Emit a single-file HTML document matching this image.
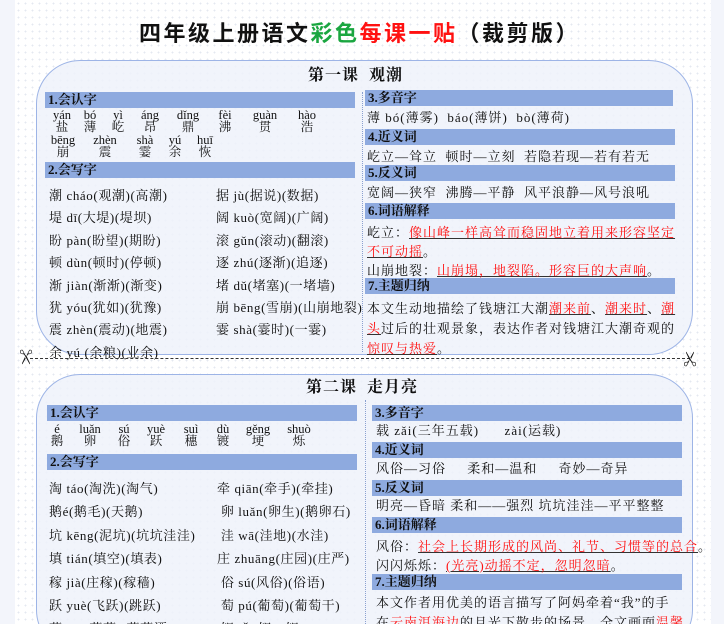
<!DOCTYPE html>
<html><head><meta charset="utf-8"><style>
*{margin:0;padding:0;box-sizing:border-box}
html,body{width:724px;height:624px;overflow:hidden}
body{background:#f3f5fb;position:relative;font-family:"Liberation Serif","Noto Serif CJK SC",serif;color:#111;font-size:13px}
#w{position:absolute;left:0;top:0;width:724px;height:624px;overflow:hidden}
.page{position:absolute;left:15px;top:0;width:696px;height:624px;background:#fff;background-image:radial-gradient(#e4e8f0 0.8px,transparent 0.9px);background-size:7px 7px}
.card{position:absolute;left:36px;width:657px;border:1.5px solid #9db4e6;border-radius:44px;background:rgba(238,242,250,0.85)}
.t{position:absolute;white-space:nowrap;line-height:14px}
.rc{letter-spacing:1px}
.lc{letter-spacing:0.6px}
.bar{position:absolute;background:#8eaadf;height:16px;font-weight:bold;font-size:13px;line-height:16px;padding-left:3px;white-space:nowrap}
.r{color:#f11}
.u{text-decoration:underline;text-decoration-color:#333}
.vd{position:absolute;border-left:1px dotted #8aa0d0;width:0}
.ttl{position:absolute;font-weight:bold;font-size:16px;white-space:nowrap;letter-spacing:1px}
.p{position:absolute;text-align:center;width:40px;line-height:12px;font-size:12.5px;white-space:nowrap}
</style></head><body><div id="w">
<div class="page"></div>
<div class="t" style="left:139px;top:19px;font-size:22px;line-height:30px;letter-spacing:2.5px;font-weight:bold;font-family:'Liberation Sans','Noto Sans CJK SC',sans-serif">四年级上册语文<span style="color:#1aa640">彩色</span><span style="color:#f11">每课一贴</span>（裁剪版）</div>

<div class="card" style="top:60px;height:295px"></div>
<div class="ttl" style="left:308px;top:62px">第一课 &nbsp;观潮</div>
<div class="vd" style="left:362px;top:92px;height:260px"></div>
<div class="bar" style="left:45px;top:92px;width:310px">1.会认字</div>
<div class="p" style="left:42px;top:109px">yán<br>盐</div>
<div class="p" style="left:70px;top:109px">bó<br>薄</div>
<div class="p" style="left:98px;top:109px">yì<br>屹</div>
<div class="p" style="left:130px;top:109px">áng<br>昂</div>
<div class="p" style="left:168px;top:109px">dǐng<br>鼎</div>
<div class="p" style="left:205px;top:109px">fèi<br>沸</div>
<div class="p" style="left:245px;top:109px">guàn<br>贯</div>
<div class="p" style="left:287px;top:109px">hào<br>浩</div>
<div class="p" style="left:43px;top:134px">bēng<br>崩</div>
<div class="p" style="left:85px;top:134px">zhèn<br>震</div>
<div class="p" style="left:125px;top:134px">shà<br>霎</div>
<div class="p" style="left:155px;top:134px">yú<br>余</div>
<div class="p" style="left:185px;top:134px">huī<br>恢</div>
<div class="bar" style="left:45px;top:162px;width:310px">2.会写字</div>
<div class="t lc" style="left:49px;top:185px;line-height:22.4px">潮 cháo(观潮)(高潮)<br>堤 dī(大堤)(堤坝)<br>盼 pàn(盼望)(期盼)<br>顿 dùn(顿时)(停顿)<br>渐 jiàn(渐渐)(渐变)<br>犹 yóu(犹如)(犹豫)<br>震 zhèn(震动)(地震)<br>余 yú (余粮)(业余)</div>
<div class="t lc" style="left:216px;top:185px;line-height:22.4px">据 jù(据说)(数据)<br>阔 kuò(宽阔)(广阔)<br>滚 gǔn(滚动)(翻滚)<br>逐 zhú(逐渐)(追逐)<br>堵 dǔ(堵塞)(一堵墙)<br>崩 bēng(雪崩)(山崩地裂)<br>霎 shà(霎时)(一霎)</div>
<div class="bar" style="left:365px;top:90px;width:308px">3.多音字</div>
<div class="t rc" style="left:367px;top:111px">薄 bó(薄雾) &nbsp;báo(薄饼) &nbsp;bò(薄荷)</div>
<div class="bar" style="left:365px;top:129px;width:310px">4.近义词</div>
<div class="t rc" style="left:367px;top:150px">屹立—耸立 &nbsp;顿时—立刻 &nbsp;若隐若现—若有若无</div>
<div class="bar" style="left:365px;top:165px;width:310px">5.反义词</div>
<div class="t rc" style="left:367px;top:186px">宽阔—狭窄 &nbsp;沸腾—平静 &nbsp;风平浪静—风号浪吼</div>
<div class="bar" style="left:365px;top:203px;width:310px">6.词语解释</div>
<div class="t rc" style="left:367px;top:223px;line-height:19px">屹立：<span class="r u">像山峰一样高耸而稳固地立着用来形容坚定</span><br><span class="r u">不可动摇</span>。<br>山崩地裂：<span class="r u">山崩塌，地裂陷。形容巨的大声响</span>。</div>
<div class="bar" style="left:365px;top:278px;width:310px">7.主题归纳</div>
<div class="t rc" style="left:367px;top:299px;line-height:20px">本文生动地描绘了钱塘江大潮<span class="r u">潮来前</span>、<span class="r u">潮来时</span>、<span class="r u">潮</span><br><span class="r u">头</span>过后的壮观景象，表达作者对钱塘江大潮奇观的<br><span class="r u">惊叹与热爱</span>。</div>

<div style="position:absolute;left:30px;top:358px;width:660px;border-top:1.5px dashed #333"></div>
<div class="t" style="left:16px;top:350px;font-size:16px;transform:rotate(90deg)">✂</div>
<div class="t" style="left:684px;top:352px;font-size:16px;transform:rotate(-90deg)">✂</div>

<div class="card" style="top:374px;height:280px"></div>
<div class="ttl" style="left:306px;top:374px">第二课 &nbsp;走月亮</div>
<div class="vd" style="left:365px;top:400px;height:230px"></div>
<div class="bar" style="left:47px;top:405px;width:310px">1.会认字</div>
<div class="p" style="left:37px;top:423px">é<br>鹅</div>
<div class="p" style="left:70px;top:423px">luǎn<br>卵</div>
<div class="p" style="left:104px;top:423px">sú<br>俗</div>
<div class="p" style="left:136px;top:423px">yuè<br>跃</div>
<div class="p" style="left:171px;top:423px">suì<br>穗</div>
<div class="p" style="left:203px;top:423px">dù<br>镀</div>
<div class="p" style="left:238px;top:423px">gěng<br>埂</div>
<div class="p" style="left:279px;top:423px">shuò<br>烁</div>
<div class="bar" style="left:47px;top:454px;width:310px">2.会写字</div>
<div class="t lc" style="left:49px;top:477px;line-height:23.4px">淘 táo(淘洗)(淘气)<br>鹅é(鹅毛)(天鹅)<br>坑 kēng(泥坑)(坑坑洼洼)<br>填 tián(填空)(填表)<br>稼 jià(庄稼)(稼穑)<br>跃 yuè(飞跃)(跳跃)<br>葡 pú (葡萄)(葡萄酒)</div>
<div class="t lc" style="left:217px;top:477px;line-height:23.4px">牵 qiān(牵手)(牵挂)<br>&nbsp;卵 luǎn(卵生)(鹅卵石)<br>&nbsp;洼 wā(洼地)(水洼)<br>庄 zhuāng(庄园)(庄严)<br>&nbsp;俗 sú(风俗)(俗语)<br>&nbsp;萄 pú(葡萄)(葡萄干)<br>&nbsp;铝 lǚ (铝.)(铝.)</div>
<div class="bar" style="left:372px;top:405px;width:310px">3.多音字</div>
<div class="t rc" style="left:376px;top:424px">载 zǎi(三年五载) &nbsp;&nbsp;&nbsp;&nbsp;&nbsp;zài(运载)</div>
<div class="bar" style="left:372px;top:442px;width:310px">4.近义词</div>
<div class="t rc" style="left:376px;top:462px">风俗—习俗 &nbsp;&nbsp;&nbsp;&nbsp;柔和—温和 &nbsp;&nbsp;&nbsp;&nbsp;奇妙—奇异</div>
<div class="bar" style="left:372px;top:480px;width:310px">5.反义词</div>
<div class="t rc" style="left:376px;top:499px">明亮—昏暗 柔和——强烈 坑坑洼洼—平平整整</div>
<div class="bar" style="left:372px;top:517px;width:310px">6.词语解释</div>
<div class="t rc" style="left:376px;top:537px;line-height:19px">风俗：<span class="r u">社会上长期形成的风尚、礼节、习惯等的总合</span>。<br>闪闪烁烁：<span class="r u">(光亮)动摇不定，忽明忽暗</span>。</div>
<div class="bar" style="left:372px;top:574px;width:310px">7.主题归纳</div>
<div class="t rc" style="left:376px;top:593px;line-height:20px">本文作者用优美的语言描写了阿妈牵着“我”的手<br>在<span class="r">云南洱海边</span>的月光下散步的场景。全文画面<span class="r">温馨</span>、</div>
</div></body></html>
